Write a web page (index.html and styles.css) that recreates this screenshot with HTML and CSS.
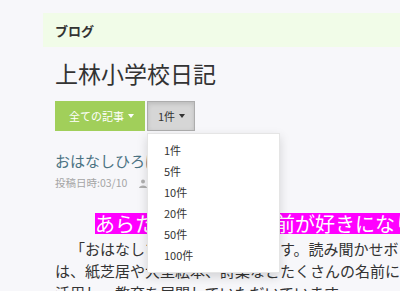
FILE: index.html
```html
<!DOCTYPE html>
<html lang="ja">
<head>
  <meta charset="UTF-8" />
  <meta name="viewport" content="width=device-width, initial-scale=1.0"/>
  <title>上林小学校日記</title>
  <link rel="stylesheet" href="styles.css">
</head>
<body>
  <div class="page">
    <div class="page-header">ブログ</div>

    <div class="content">
      <h1 class="blog-title">上林小学校日記</h1>

      <div class="toolbar">
        <button class="btn btn-green">全ての記事 <span class="caret"></span></button>
        <div class="btn-group">
          <button class="btn btn-gray">1件 <span class="caret"></span></button>
          <ul class="dropdown">
            <li>1件</li>
            <li>5件</li>
            <li>10件</li>
            <li>20件</li>
            <li>50件</li>
            <li>100件</li>
          </ul>
        </div>
      </div>

      <div class="post">
        <a class="post-title" href="#">おはなしひろば</a>
        <div class="post-meta">
          投稿日時:03/10
          <svg class="meta-icon" width="8" height="9" viewBox="0 0 8 9">
            <circle cx="4" cy="2.5" r="2" fill="#b0b0b0"/>
            <path d="M0 9 C0 5.5 8 5.5 8 9 Z" fill="#b0b0b0"/>
          </svg>
        </div>

        <p class="highlight"><span>あらたな本や詩の名前が好きになりました</span></p>

        <p class="post-body">　「おはなしひろば」は読書会です。読み聞かせボランティアの皆さんの活動では、紙芝居や大型絵本、詩集などたくさんの名前に触れる機会となっています。活用し、教育を展開していただいています。</p>
      </div>
    </div>
  </div>
</body>
</html>
```

FILE: styles.css
```css
body {
  margin: 0;
  background: #f7f7fa;
  font-family: "Noto Sans CJK JP", "Noto Sans", sans-serif;
  color: #333;
  overflow: hidden;
  text-spacing-trim: space-all;
}

.page {
  padding: 13px 0 0 43px;
}

.page-header {
  height: 34px;
  display: flex;
  align-items: center;
  padding-left: 12px;
  background: #f1fce8;
  font-size: 13px;
  font-weight: bold;
  color: #333;
}

.content {
  padding-left: 12px;
  width: 541px;
}

.blog-title {
  margin: 12px 0 0;
  font-size: 23px;
  line-height: 28px;
  font-weight: normal;
  color: #333;
}

.toolbar {
  display: flex;
  gap: 2px;
  margin-top: 14px;
}

.btn {
  height: 30px;
  border: 1px solid transparent;
  font-family: inherit;
  font-size: 11px;
  display: flex;
  align-items: center;
  gap: 4px;
  cursor: pointer;
}

.btn-green {
  background: #a1cf5a;
  border-color: #a1cf5a;
  color: #fff;
  padding: 0 10px 0 13px;
}

.btn-gray {
  background: #d6d6d6;
  border-color: #adadad;
  color: #333;
  padding: 0 9px 0 10px;
  box-shadow: inset 0 2px 4px rgba(0, 0, 0, 0.12);
}

.caret {
  width: 0;
  height: 0;
  border-top: 4px solid currentColor;
  border-left: 3px solid transparent;
  border-right: 3px solid transparent;
}

.btn-group {
  position: relative;
}

.dropdown {
  position: absolute;
  top: 32px;
  left: 0;
  width: 131px;
  margin: 0;
  padding: 6px 0;
  list-style: none;
  background: #fff;
  border: 1px solid rgba(0, 0, 0, 0.1);
  box-shadow: 0 4px 10px rgba(0, 0, 0, 0.15);
  z-index: 10;
}

.dropdown li {
  height: 21px;
  line-height: 21px;
  padding-left: 16px;
  font-size: 11px;
  color: #333;
}

.post-title {
  display: block;
  margin-top: 20px;
  font-size: 15px;
  line-height: 20px;
  color: #4a7282;
  text-decoration: none;
}

.post-meta {
  margin-top: 5px;
  font-size: 10.5px;
  line-height: 14px;
  color: #a5a5a5;
  display: flex;
  align-items: center;
  gap: 12px;
}

.highlight {
  margin: 23px 0 0;
  padding-left: 40px;
  white-space: nowrap;
  line-height: 21px;
}

.highlight span {
  display: inline-block;
  background: #ff00ff;
  color: #fff;
  font-size: 20px;
  line-height: 21px;
}

.post-body {
  margin: 2px 0 0;
  font-size: 15px;
  line-height: 22px;
  color: #333;
}
```
